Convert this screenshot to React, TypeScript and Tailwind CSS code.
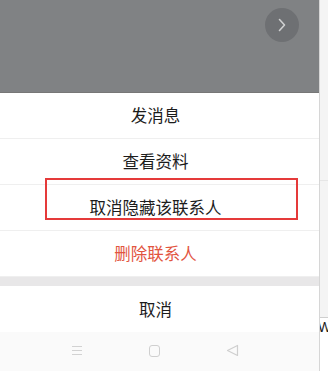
import React from "react";

const font = { fontFamily: '"Noto Sans CJK SC", "Noto Sans", sans-serif' };

function Row({ text, red }: { text: string; red?: boolean }) {
  return (
    <div className="h-[46px] flex items-center justify-center pr-[8px] border-b border-[#efefef] bg-white">
      <span className={`text-[16.5px] leading-none ${red ? "text-[#e2553f]" : "text-[#1c1c1c]"}`}>{text}</span>
    </div>
  );
}

export default function App() {
  return (
    <div className="w-[328px] h-[371px] flex overflow-hidden bg-white" style={font}>
      <div className="w-[319px] flex flex-col relative">
        <div className="h-[93px] bg-[#808284] flex justify-end items-start pt-[8px] pr-[20px] border-b border-[#777]">
          <div className="w-[34px] h-[34px] rounded-full bg-[#6e7073] flex items-center justify-center">
            <svg width="10" height="14" viewBox="0 0 10 14" fill="none">
              <path d="M2.5 1.5 L7.5 7 L2.5 12.5" stroke="#cfd0d1" strokeWidth="1.6" strokeLinecap="round" strokeLinejoin="round" />
            </svg>
          </div>
        </div>
        <Row text="发消息" />
        <Row text="查看资料" />
        <Row text="取消隐藏该联系人" />
        <Row text="删除联系人" red />
        <div className="h-[9px] bg-[#e8e7e8]" />
        <div className="h-[46px] flex items-center justify-center pr-[8px] bg-white">
          <span className="text-[16.5px] leading-none text-[#1c1c1c]">取消</span>
        </div>
        <div className="flex-1 bg-[#fafafa] flex items-center gap-[66px] pl-[71px] pb-[2px]">
          <svg width="12" height="11" viewBox="0 0 12 11">
            <path d="M1 1.5 H11 M1 5.5 H11 M1 9.5 H11" stroke="#d2d2d2" strokeWidth="1.2" />
          </svg>
          <div className="w-[11px] h-[12px] rounded-[3px] border border-[#cfcfcf]" />
          <svg width="13" height="13" viewBox="0 0 13 13">
            <path d="M11.5 1.5 V11.5 L1.5 6.5 Z" fill="none" stroke="#cfcfcf" strokeWidth="1.2" strokeLinejoin="round" />
          </svg>
        </div>
        <div className="absolute left-[45px] top-[178px] w-[253px] h-[42px] border-2 border-[#e53a3a]" />
      </div>
      <div className="w-[9px] flex flex-col border-l border-[#d6d6d6] bg-[#f4f4f4]">
        <div className="h-[181px] border-b border-[#e6e6e6]" />
        <div className="h-[137px] border-b border-[#cfcfcf]" />
        <div className="flex-1 bg-white overflow-hidden pt-[2px]">
          <span className="block text-[14px] leading-none text-[#222] -ml-[2px]" style={{ fontFamily: '"Liberation Sans", sans-serif' }}>W</span>
        </div>
      </div>
    </div>
  );
}
